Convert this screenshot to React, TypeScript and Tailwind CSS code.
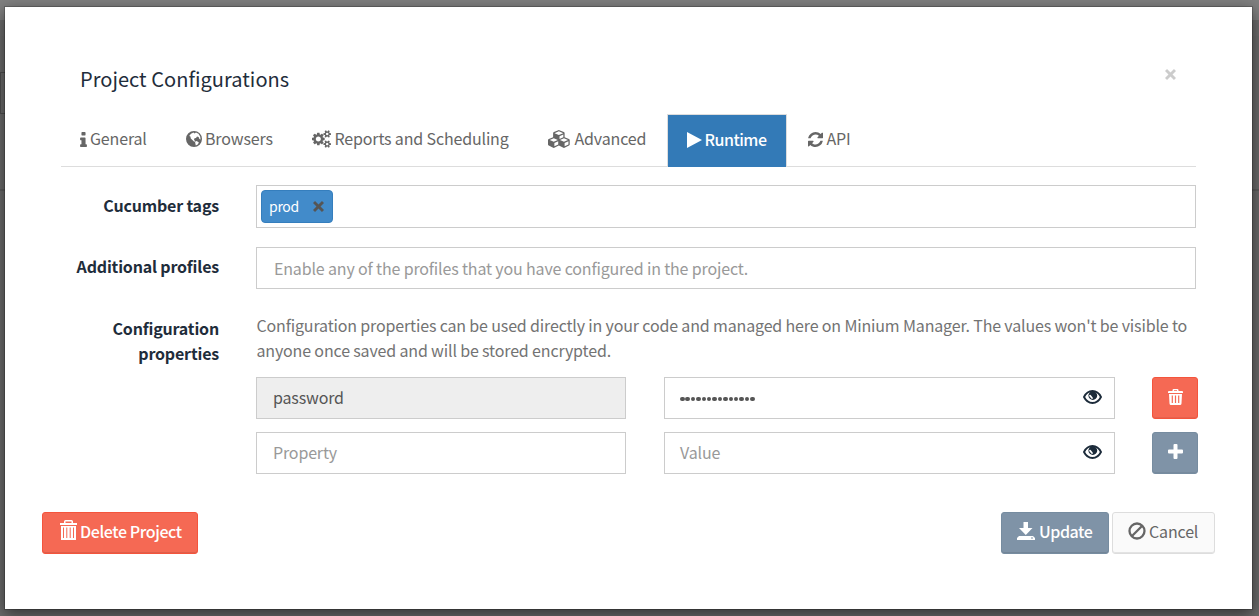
import type { ReactNode } from "react";

type GlyphProps = { box: string; d: string; className?: string };

function Glyph({ box, d, className }: GlyphProps) {
  return (
    <svg viewBox={box} fill="currentColor" fillRule="evenodd" className={`shrink-0 ${className ?? ""}`}>
      <path d={d} />
    </svg>
  );
}

const INFO =
  "M1216 1344v128q0 26-19 45t-45 19h-512q-26 0-45-19t-19-45v-128q0-26 19-45t45-19h64v-384h-64q-26 0-45-19t-19-45v-128q0-26 19-45t45-19h384q26 0 45 19t19 45v576h64q26 0 45 19t19 45zm-128-1152v192q0 26-19 45t-45 19h-256q-26 0-45-19t-19-45v-192q0-26 19-45t45-19h256q26 0 45 19t19 45z";
const GLOBE =
  "M8 0A8 8 0 1 1 8 16A8 8 0 1 1 8 0zM5 2.800L7.500 1.500 8.500 2.600 10 1.600 12.500 2.800 14.200 5.500 14.600 8.500 13.400 8 12.600 6 11 5.500 10 7 8.500 7.200 8 8.800 9.200 10.200 8.200 10.800 6.400 9 4.800 7.600 4.400 5.400 3.200 5zM9 10.800L10.500 10 12.800 11.200 12 13.200 9.800 14.500z";
const COGS =
  "M896 896q0-106-75-181t-181-75-181 75-75 181 75 181 181 75 181-75 75-181zm768 512q0-52-38-90t-90-38-90 38-38 90q0 53 37.5 90.5t90.5 37.5 90.5-37.5 37.5-90.5zm0-1024q0-52-38-90t-90-38-90 38-38 90q0 53 37.5 90.5t90.5 37.5 90.5-37.5 37.5-90.5zm-384 421v185q0 10-7 19.5t-16 10.5l-155 24q-11 35-32 76 34 48 90 115 7 11 7 20 0 12-7 19-23 30-82.5 89.5t-78.5 59.5q-11 0-21-7l-115-90q-37 19-77 31-11 108-23 155-7 24-30 24h-186q-11 0-20-7.5t-10-17.5l-23-153q-34-10-75-31l-118 89q-7 7-20 7-11 0-21-8-144-133-144-160 0-9 7-19 10-14 41-53t47-61q-23-44-35-82l-152-24q-10-1-17-9.5t-7-19.5v-185q0-10 7-19.5t16-10.5l155-24q11-35 32-76-34-48-90-115-7-11-7-20 0-12 7-20 22-30 82-89t79-59q11 0 21 7l115 90q34-18 77-32 11-108 23-154 7-24 30-24h186q11 0 20 7.5t10 17.5l23 153q34 10 75 31l118-89q8-7 20-7 11 0 21 8 144 133 144 160 0 8-7 19-12 16-42 54t-45 60q23 48 34 82l152 23q10 2 17 10.5t7 19.5zm640 533v140q0 16-149 31-12 27-30 52 51 113 51 138 0 4-4 7-122 71-124 71-8 0-46-47t-52-68q-20 2-30 2t-30-2q-14 21-52 68t-46 47q-2 0-124-71-4-3-4-7 0-25 51-138-18-25-30-52-149-15-149-31v-140q0-16 149-31 13-29 30-52-51-113-51-138 0-4 4-7 4-2 35-20t59-34 30-16q8 0 46 46.5t52 67.5q20-2 30-2t30 2q51-71 92-112l6-2q4 0 124 70 4 3 4 7 0 25-51 138 17 23 30 52 149 15 149 31zm0-1024v140q0 16-149 31-12 27-30 52 51 113 51 138 0 4-4 7-122 71-124 71-8 0-46-47t-52-68q-20 2-30 2t-30-2q-14 21-52 68t-46 47q-2 0-124-71-4-3-4-7 0-25 51-138-18-25-30-52-149-15-149-31v-140q0-16 149-31 13-29 30-52-51-113-51-138 0-4 4-7 4-2 35-20t59-34 30-16q8 0 46 46.5t52 67.5q20-2 30-2t30 2q51-71 92-112l6-2q4 0 124 70 4 3 4 7 0 25-51 138 17 23 30 52 149 15 149 31z";
const CUBES =
  "M640 1632l384-192v-314l-384 164v342zm-64-454l404-173-404-173-404 173zm1088 454l384-192v-314l-384 164v342zm-64-454l404-173-404-173-404 173zm-448-293l384-165v-266l-384 164v267zm-64-379l441-189-441-189-441 189zm1088 518v416q0 36-19 67t-52 47l-448 224q-25 14-57 14t-57-14l-448-224q-4-2-7-4-2 2-7 4l-448 224q-25 14-57 14t-57-14l-448-224q-33-16-52-47t-19-67v-416q0-38 21.5-70t56.5-48l434-186v-400q0-38 21.5-70t56.5-48l448-192q23-10 50-10t50 10l448 192q35 16 56.5 48t21.5 70v400l434 186q36 16 57 48t21 70z";
const REFRESH =
  "M1511 928q0 5-1 7-64 268-268 434.5t-478 166.5q-146 0-282.5-55t-243.5-157l-129 129q-19 19-45 19t-45-19-19-45v-448q0-26 19-45t45-19h448q26 0 45 19t19 45-19 45l-137 137q71 66 161 102t187 36q134 0 250-65t186-179q11-17 53-117 8-23 30-23h192q13 0 22.5 9.5t9.5 22.5zm25-800v448q0 26-19 45t-45 19h-448q-26 0-45-19t-19-45 19-45l138-138q-148-137-349-137-134 0-250 65t-186 179q-11 17-53 117-8 23-30 23h-199q-13 0-22.5-9.5t-9.5-22.5v-7q65-268 270-434.5t480-166.5q146 0 284 55.5t245 156.5l130-129q19-19 45-19t45 19 19 45z";
const CROSS = "M2.2 0L6 3.8 9.8 0 12 2.200 8.200 6 12 9.800 9.800 12 6 8.200 2.200 12 0 9.800 3.800 6 0 2.200z";
const TRASH =
  "M4.500 2V1.200Q4.500 0 5.700 0H9.300Q10.500 0 10.500 1.200V2H14Q15 2 15 3V4H0V3Q0 2 1 2zM6 2H9V1.300H6zM1 5H14L13.500 14.500Q13.400 16 12 16H3Q1.600 16 1.500 14.500zM3.700 6.500V14H4.900V6.500zM6.900 6.500V14H8.100V6.500zM10.100 6.500V14H11.300V6.500z";
const BIN =
  "M4 3V1.500Q4 0 5.500 0H11.500Q13 0 13 1.500V3H17V5H0V3zM5.500 3H11.500V1.500H5.500zM1 6H16V20H1zM3 7.500V18H4V7.500zM6.300 7.500V18H7.300V7.500zM9.700 7.500V18H10.700V7.500zM13 7.500V18H14V7.500z";
const SAVE = "M6.500 0H11V6H15.500L8.800 13 2 6H6.500zM2 14H16L18 16V18H0V16zM14 15.500V16.500H16V15.500z";
const PLUS = "M5.500 1Q5.500 0 6.500 0H8.500Q9.500 0 9.500 1V5.500H14Q15 5.500 15 6.500V8.500Q15 9.500 14 9.500H9.500V14Q9.500 15 8.500 15H6.500Q5.500 15 5.500 14V9.500H1Q0 9.500 0 8.500V6.500Q0 5.500 1 5.500H5.500z";

function Eye() {
  return (
    <svg viewBox="0 0 19 14" className="mb-0.5 h-[14px] w-[19px] shrink-0 text-[#1c2b3a]">
      <path d="M1 7Q4 1 9.500 1T18 7Q15 13 9.500 13T1 7z" fill="none" stroke="currentColor" strokeWidth="1.900" />
      <circle cx="9.800" cy="5.500" r="4.400" fill="currentColor" />
      <path d="M7 5.600L9 8" fill="none" stroke="white" strokeWidth="1.700" strokeLinecap="round" />
    </svg>
  );
}

function Tab({ icon, children, className }: { icon: ReactNode; children: string; className: string }) {
  return (
    <div className={`flex h-12 items-center text-[#666] ${className}`}>
      <span className="flex pt-0.5">{icon}</span>
      <span>{children}</span>
    </div>
  );
}

function Label({ children, className }: { children: ReactNode; className: string }) {
  return (
    <div className={`w-[158px] shrink-0 text-right font-bold tracking-[-0.18px] text-[#1f2d3b] ${className}`}>{children}</div>
  );
}

export default function App() {
  return (
    <div className="relative h-[616px] w-[1259px] overflow-hidden bg-[#6c6c6c] font-['Noto_Sans_CJK_SC','Noto_Sans',sans-serif] text-[16px] leading-[25px] tracking-[-0.155px]">
      {/* dimmed page behind the dialog */}
      <div className="h-5 bg-[#808080]" />
      <div className="h-4 bg-[#6e6e6e]" />
      <div className="mt-9 h-[42px] w-10 border border-[#4f4f4f]" />
      <div className="mt-[75px] h-[2px] bg-[#5e5e5e]" />

      <div className="absolute left-1 top-1.5 flex h-[604px] w-[1249px] flex-col border border-[#00000033] bg-white bg-clip-padding shadow-[0_5px_15px_rgba(0,0,0,0.5)]">
        <div className="ml-[75px] mr-[76px] mt-[54px] flex h-[53px] justify-between">
          <h4 className="pt-1 text-[20px] leading-7 tracking-[0.04px] text-[#1f2d3b]">Project Configurations</h4>
          <Glyph box="0 0 12 12" d={CROSS} className="mt-2 h-[11px] w-[11px] text-[#ccc]" />
        </div>

        <div className="ml-14 flex h-[53px] w-[1135px] border-b border-[#ddd]">
          <Tab className="ml-[19px] w-[106px] gap-[3px]" icon={<Glyph box="576 128 640 1408" d={INFO} className="h-[15px] w-[7px]" />}>
            General
          </Tab>
          <Tab className="w-[126px] gap-[3px]" icon={<Glyph box="0 0 16 16" d={GLOBE} className="h-4 w-4" />}>
            Browsers
          </Tab>
          <Tab className="w-[236px] gap-[3.5px]" icon={<Glyph box="0 0 1920 1792" d={COGS} className="h-[18px] w-[19px]" />}>
            Reports and Scheduling
          </Tab>
          <Tab className="w-[119px] gap-[3.5px]" icon={<Glyph box="0 0 2304 1792" d={CUBES} className="h-[18px] w-[23px]" />}>
            Advanced
          </Tab>
          <div className="flex h-[53px] w-[120px] shrink-0 items-center gap-[2.5px] border border-b-0 border-[#ddd] bg-[#337ab7] pb-[3px] pl-[19px] font-medium tracking-[-0.5px] text-white">
            <Glyph box="0 0 15 16" d="M0 0L15 8 0 16z" className="h-4 w-[15px]" />
            <span>Runtime</span>
          </div>
          <Tab className="ml-[21px] gap-[3.5px]" icon={<Glyph box="0 0 1536 1536" d={REFRESH} className="h-[15px] w-[15px]" />}>
            API
          </Tab>
        </div>

        <div className="ml-14 mt-[18px] flex gap-[37px]">
          <Label className="pt-2">Cucumber tags</Label>
          <div className="flex h-[43px] w-[940px] border border-[#ccc] p-1">
            <div className="flex h-[33px] w-[72px] items-center justify-between rounded-[4px] border border-[#357ebd] bg-[#428bca] pl-[7px] pr-2 text-[14px] tracking-[-0.3px] text-white">
              prod
              <Glyph box="0 0 12 12" d={CROSS} className="h-[11px] w-[11px] text-[#555]" />
            </div>
          </div>
        </div>

        <div className="ml-14 mt-[19px] flex gap-[37px]">
          <Label className="pt-[7px]">Additional profiles</Label>
          <div className="flex h-[42px] w-[940px] items-center border border-[#ccc] pl-[17px] text-[#999]">
            Enable any of the profiles that you have configured in the project.
          </div>
        </div>

        <div className="ml-14 mt-6 flex gap-[37px]">
          <Label className="pt-[3px]">
            Configuration
            <br />
            properties
          </Label>
          <div className="w-[942px]">
            <p className="h-16 whitespace-nowrap pl-[0.5px] text-[#737373]">
              Configuration properties can be used directly in your code and managed here on Minium Manager. The values won't be visible to
              <br />
              anyone once saved and will be stored encrypted.
            </p>
            <div className="flex h-[42px]">
              <div className="flex w-[370px] items-center border border-[#ccc] bg-[#eee] pb-0.5 pl-4 text-[#555]">password</div>
              <div className="ml-[38px] flex w-[451px] items-center justify-between border border-[#ccc] pl-[15px] pr-3 text-[#555]">
                <div className="flex gap-[0.9px] pt-[2px]">
                  {Array.from({ length: 14 }, (_, i) => (
                    <span key={i} className="h-[4.5px] w-[4.5px] rounded-full bg-[#555]" />
                  ))}
                </div>
                <Eye />
              </div>
              <div className="ml-[37px] flex w-[46px] items-center justify-center rounded-[3px] border border-[#f4543c] bg-[#f56954] pb-[3px] text-white shadow-[inset_0_-1px_0_rgba(0,0,0,0.06)]">
                <Glyph box="0 0 15 16" d={TRASH} className="h-4 w-[15px]" />
              </div>
            </div>
            <div className="mt-[13px] flex h-[42px]">
              <div className="flex w-[370px] items-center border border-[#ccc] pb-0.5 pl-4 text-[#999]">Property</div>
              <div className="ml-[38px] flex w-[451px] items-center justify-between border border-[#ccc] pl-[15px] pr-3 text-[#999]">
                <span className="pb-0.5">Value</span>
                <Eye />
              </div>
              <div className="ml-[37px] flex w-[46px] items-center justify-center rounded-[3px] border border-[#768ca0] bg-[#7f93a7] pb-[3px] text-white shadow-[inset_0_-1px_0_rgba(0,0,0,0.06)]">
                <Glyph box="0 0 15 15" d={PLUS} className="h-[15px] w-[15px]" />
              </div>
            </div>
          </div>
        </div>

        <div className="ml-[37px] mt-[38px] flex h-[42px] w-[1173px]">
          <div className="flex w-[156px] items-center gap-[3px] whitespace-nowrap rounded-[3px] border border-[#f4543c] bg-[#f56954] pb-1 pl-[17px] font-medium tracking-[-0.4px] text-white shadow-[inset_0_-1px_0_rgba(0,0,0,0.09)]">
            <Glyph box="0 0 17 20" d={BIN} className="-mt-0.5 h-5 w-[17px]" />
            Delete Project
          </div>
          <div className="ml-auto flex w-[108px] items-center gap-1 rounded-[3px] border border-[#768ca0] bg-[#7f93a7] pb-1 pl-[15px] font-medium tracking-[-0.45px] text-white shadow-[inset_0_-1px_0_rgba(0,0,0,0.09)]">
            <Glyph box="0 0 18 18" d={SAVE} className="h-[18px] w-[18px]" />
            Update
          </div>
          <div className="ml-[3px] flex w-[103px] items-center gap-[3px] rounded-[3px] border border-[#ddd] bg-[#fafafa] pb-1 pl-[15px] text-[#666] shadow-[inset_0_-1px_0_rgba(0,0,0,0.09)]">
            <svg viewBox="0 0 18 18" className="h-[18px] w-[18px]" fill="none" stroke="currentColor" strokeWidth="2.300">
              <circle cx="9" cy="9" r="7.500" />
              <path d="M4 14L14 4" />
            </svg>
            Cancel
          </div>
        </div>
      </div>
    </div>
  );
}
